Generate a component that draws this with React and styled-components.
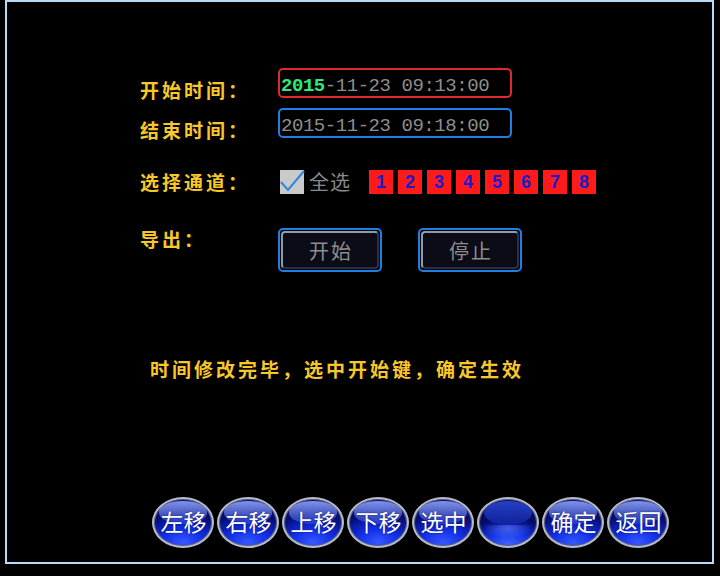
import React from "react";
import styled, { createGlobalStyle } from "styled-components";

const Global = createGlobalStyle`
  html, body { margin: 0; padding: 0; background: #000; }
  body { width: 720px; height: 576px; overflow: hidden; }
`;

const Screen = styled.div`
  width: 720px;
  height: 576px;
  background: #000;
  display: flex;
  align-items: flex-start;
`;

const Frame = styled.div`
  margin-left: 5px;
  width: 709px;
  height: 564px;
  box-sizing: border-box;
  border: 2px solid #b4dcf8;
  display: flex;
  flex-direction: column;
`;

const Form = styled.div`
  margin-top: 66px;
  padding-left: 133px;
  display: flex;
  flex-direction: column;
`;

const Row = styled.div`
  display: flex;
  align-items: ${(p) => p.$align || "flex-start"};
  height: ${(p) => p.$h}px;
  margin-top: ${(p) => p.$top || 0}px;
`;

const Label = styled.div`
  width: 138px;
  flex: none;
  margin-top: ${(p) => p.$offset || 0}px;
  color: #f8c828;
  font-family: "Noto Sans CJK SC", sans-serif;
  font-weight: 700;
  font-size: 19px;
  line-height: 20px;
  letter-spacing: 3px;
  white-space: nowrap;
`;

const TimeBox = styled.div`
  width: 234px;
  height: 30px;
  box-sizing: border-box;
  border: 2px solid ${(p) => p.$color};
  border-radius: 5px;
  padding: 5px 0 0 1px;
  display: flex;
  align-items: center;
  font-family: "Liberation Mono", monospace;
  font-size: 19px;
  letter-spacing: -0.45px;
  color: #8e8e8e;
  white-space: pre;
`;

const Year = styled.span`
  color: #2ee878;
  font-weight: 700;
`;

const Check = styled.div`
  width: 24px;
  height: 24px;
  flex: none;
  margin-left: 2px;
  background: #cacaca;
  position: relative;
  svg {
    position: absolute;
    left: 0;
    top: 0;
    overflow: visible;
  }
`;

const AllText = styled.span`
  margin-left: 5px;
  color: #8a8a8a;
  font-family: "Noto Sans CJK SC", sans-serif;
  font-size: 20px;
  line-height: 24px;
  letter-spacing: 1px;
`;

const Channels = styled.div`
  display: flex;
  gap: 5px;
  margin-left: 18px;
`;

const Chan = styled.div`
  width: 24px;
  height: 24px;
  background: #ff1a1a;
  color: #1a1ad0;
  display: flex;
  align-items: center;
  justify-content: center;
  font-family: "Liberation Sans", sans-serif;
  font-weight: 700;
  font-size: 18px;
`;

const ExportButtons = styled.div`
  display: flex;
  gap: 36px;
`;

const ExButton = styled.div`
  width: 104px;
  height: 44px;
  box-sizing: border-box;
  border: 2px solid #1e80e4;
  border-radius: 5px;
  padding: 1px;
  display: flex;
`;

const ExInner = styled.div`
  flex: 1;
  border: 2px solid;
  border-color: #8c9cac #283048 #283048 #8c9cac;
  border-radius: 4px;
  background: #0c0c16;
  display: flex;
  align-items: center;
  justify-content: center;
  color: #8e8e8e;
  font-family: "Noto Sans CJK SC", sans-serif;
  font-size: 20px;
  letter-spacing: 2px;
  padding-left: 2px;
`;

const Message = styled.div`
  margin-top: 87px;
  padding-left: 10px;
  color: #f8c828;
  font-family: "Noto Sans CJK SC", sans-serif;
  font-weight: 700;
  font-size: 19px;
  line-height: 20px;
  letter-spacing: 3px;
  white-space: nowrap;
`;

const BottomBar = styled.div`
  margin-top: auto;
  margin-bottom: 14px;
  padding-left: 145px;
  display: flex;
  gap: 3px;
`;

const Oval = styled.div`
  position: relative;
  width: 62px;
  height: 51px;
  box-sizing: border-box;
  border-radius: 50%;
  border: 2px solid #b8bcc8;
  box-shadow: inset 0 0 0 1px #5a5f7a;
  background: ${(p) =>
    p.$blank
      ? "radial-gradient(ellipse 80% 55% at 50% 95%, #3e62ff 0%, #1434e6 45%, #0a1aa8 75%, #040c60 100%)"
      : "radial-gradient(ellipse 75% 60% at 50% 92%, #3658ff 0%, #1230ea 45%, #0a1cb0 75%, #050e70 100%)"};
  display: flex;
  align-items: center;
  justify-content: center;
  overflow: hidden;
  color: #fff;
  font-family: "Noto Sans CJK SC", sans-serif;
  font-size: 23px;
  line-height: 26px;
  padding: 0 0 4px 1px;
  &::before {
    content: "";
    position: absolute;
    left: 8%;
    top: 2px;
    width: 84%;
    height: ${(p) => (p.$blank ? "52%" : "48%")};
    border-radius: 50%;
    background: ${(p) =>
      p.$blank
        ? "linear-gradient(180deg, rgba(40,70,210,0.9) 0%, rgba(20,40,170,0.7) 100%)"
        : "linear-gradient(180deg, rgba(150,170,255,0.85) 0%, rgba(70,100,255,0.35) 100%)"};
  }
  &::after {
    content: "";
    position: absolute;
    left: 0;
    right: 0;
    bottom: 0;
    height: 45%;
    background: ${(p) =>
      p.$blank
        ? "radial-gradient(ellipse 60% 70% at 50% 15%, rgba(120,150,255,0.5) 0%, rgba(0,0,0,0) 70%)"
        : "none"};
  }
`;

const OvalText = styled.span`
  position: relative;
  z-index: 1;
  text-shadow: 0 0 2px rgba(0, 0, 40, 0.6);
`;

const channels = [1, 2, 3, 4, 5, 6, 7, 8];
const bottom = ["左移", "右移", "上移", "下移", "选中", "", "确定", "返回"];

export default function App() {
  return (
    <Screen>
      <Global />
      <Frame>
        <Form>
          <Row $h={30}>
            <Label $offset={12}>开始时间：</Label>
            <TimeBox $color="#e02830">
              <Year>2015</Year>-11-23 09:13:00
            </TimeBox>
          </Row>
          <Row $h={30} $top={10}>
            <Label $offset={12}>结束时间：</Label>
            <TimeBox $color="#1e80e4">2015-11-23 09:18:00</TimeBox>
          </Row>
          <Row $h={24} $top={32} $align="center">
            <Label>选择通道：</Label>
            <Check>
              <svg width="24" height="24" viewBox="0 0 24 24">
                <polyline points="1,12 8,20 24,1" fill="none" stroke="#2a86e0" strokeWidth="2" />
              </svg>
            </Check>
            <AllText>全选</AllText>
            <Channels>
              {channels.map((c) => (
                <Chan key={c}>{c}</Chan>
              ))}
            </Channels>
          </Row>
          <Row $h={44} $top={34}>
            <Label $offset={1}>导出：</Label>
            <ExportButtons>
              <ExButton>
                <ExInner>开始</ExInner>
              </ExButton>
              <ExButton>
                <ExInner>停止</ExInner>
              </ExButton>
            </ExportButtons>
          </Row>
          <Message>时间修改完毕，选中开始键，确定生效</Message>
        </Form>
        <BottomBar>
          {bottom.map((t, i) => (
            <Oval key={i} $blank={!t}>
              <OvalText>{t}</OvalText>
            </Oval>
          ))}
        </BottomBar>
      </Frame>
    </Screen>
  );
}
